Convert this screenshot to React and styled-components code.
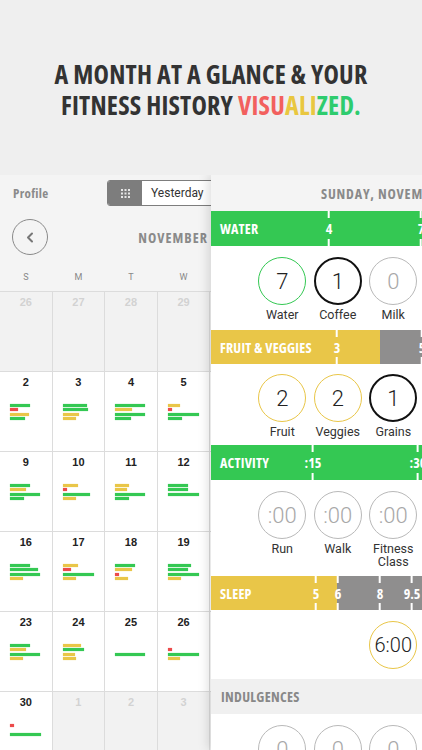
import React from 'react';
import styled, { createGlobalStyle } from 'styled-components';

const COND = `"Open Sans", "DejaVu Sans Condensed", "Roboto", sans-serif`;
const SANS = `"Roboto", "Liberation Sans", sans-serif`;
const HELV = `"Liberation Sans", "Roboto", sans-serif`;

const GREEN = '#34c853';
const YELLOW = '#e9c648';
const RED = '#ec4b4b';
const GRAY = '#8f8e8e';
const COLORS = { g: GREEN, y: YELLOW, r: RED };

const Global = createGlobalStyle`
  html, body { margin: 0; padding: 0; background: #fff; }
  body { width: 422px; height: 750px; overflow: hidden; }
  * { box-sizing: border-box; }
`;

const Page = styled.div`
  width: 422px;
  height: 750px;
  display: flex;
  flex-direction: column;
  overflow: hidden;
`;

const Hero = styled.header`
  height: 175px;
  flex: none;
  background: #efefef;
  display: flex;
  flex-direction: column;
  align-items: center;
  justify-content: center;
  padding-top: 5px;
  font-family: ${COND};
  font-stretch: 75%;
  font-weight: 700;
  font-size: 26px;
  letter-spacing: 0.2px;
  line-height: 31px;
  color: #333;
  text-align: center;
`;

const Accent = styled.span`
  color: ${(p) => p.$c};
`;

const Stage = styled.div`
  position: relative;
  flex: 1;
  overflow: hidden;
  background: #f4f4f4;
`;

const Calendar = styled.section`
  width: 368px;
`;

const Toolbar = styled.div`
  height: 36px;
  display: flex;
  align-items: center;
  padding-left: 13px;
`;

const ProfileLink = styled.span`
  width: 94px;
  font-family: ${COND};
  font-stretch: 75%;
  font-weight: 700;
  font-size: 13px;
  letter-spacing: 0.3px;
  color: #8a8a8a;
`;

const Segmented = styled.div`
  display: flex;
  height: 26px;
  border: 1px solid #7d7d7d;
  border-radius: 3px;
  overflow: hidden;
  background: #fff;
`;

const SegIcon = styled.div`
  width: 34px;
  background: #7d7d7d;
  display: grid;
  place-items: center;
`;

const SegLabel = styled.div`
  display: flex;
  align-items: center;
  padding: 0 9px;
  font-family: ${SANS};
  font-size: 12px;
  color: #333;
  border-right: 1px solid #7d7d7d;
  &:last-child { border-right: none; }
`;

const MonthRow = styled.div`
  height: 52px;
  display: grid;
  grid-template-columns: 1fr auto 1fr;
  align-items: center;
  padding-left: 12px;
`;

const BackButton = styled.button`
  width: 36px;
  height: 36px;
  border-radius: 50%;
  border: 1.5px solid #8a8a8a;
  background: transparent;
  padding: 0;
  display: grid;
  place-items: center;
`;

const MonthTitle = styled.div`
  font-family: ${COND};
  font-stretch: 75%;
  font-weight: 700;
  font-size: 14px;
  letter-spacing: 1px;
  color: #8a8a8a;
`;

const Weekdays = styled.div`
  height: 28px;
  display: grid;
  grid-template-columns: repeat(7, 51.6px);
  column-gap: 1px;
  align-items: center;
  font-family: ${SANS};
  font-size: 9px;
  color: #888;
  text-align: center;
`;

const Grid = styled.div`
  display: grid;
  grid-template-columns: repeat(7, 51.6px);
  grid-auto-rows: 79px;
  gap: 1px;
  background: #dcdcdc;
  border-top: 1px solid #dcdcdc;
`;

const Cell = styled.div`
  background: ${(p) => (p.$out ? '#f2f2f2' : '#fff')};
  padding-top: 4px;
`;

const DayNum = styled.div`
  text-align: center;
  font-family: ${HELV};
  font-weight: 700;
  font-size: 11px;
  line-height: 13px;
  color: ${(p) => (p.$out ? '#d2d2d2' : '#222')};
`;

const Bars = styled.div`
  margin-top: 15px;
  padding-left: 10px;
  display: flex;
  flex-direction: column;
  gap: 1.3px;
`;

const Bar = styled.div`
  height: 3px;
  width: ${(p) => p.$w}px;
  background: ${(p) => p.$c || 'transparent'};
  box-shadow: ${(p) => (p.$c ? `0 0 1px ${p.$c}` : 'none')};
`;

const Detail = styled.aside`
  position: absolute;
  top: 0;
  left: 211px;
  width: 211px;
  bottom: 0;
  background: #fff;
  box-shadow: -3px 0 10px rgba(0, 0, 0, 0.13);
  overflow: hidden;
`;

const DetailHeader = styled.div`
  height: 36px;
  background: #f4f4f4;
  display: flex;
  align-items: center;
  padding-left: 12px;
  white-space: nowrap;
`;

const DateTitle = styled.div`
  margin-left: 98px;
  font-family: ${COND};
  font-stretch: 75%;
  font-weight: 700;
  font-size: 14px;
  letter-spacing: 0.8px;
  color: #8a8a8a;
`;

const ScaleBar = styled.div`
  position: relative;
  height: ${(p) => p.$h}px;
  display: flex;
  align-items: center;
  background: ${(p) => p.$bg};
  overflow: hidden;
`;

const Fill = styled.div`
  position: absolute;
  top: 0;
  bottom: 0;
  left: 0;
  background: ${(p) => p.$c};
`;

const BarLabel = styled.span`
  position: relative;
  padding-left: 9px;
  font-family: ${COND};
  font-stretch: 75%;
  font-weight: 700;
  font-size: 14px;
  letter-spacing: 0.2px;
  color: #fff;
`;

const Tick = styled.div`
  position: absolute;
  top: 0;
  bottom: 0;
  transform: translateX(-50%);
  display: flex;
  flex-direction: column;
  align-items: center;
  justify-content: space-between;
  font-family: ${COND};
  font-stretch: 75%;
  font-weight: 700;
  font-size: 14px;
  color: #fff;
  line-height: 15px;
`;

const TickLine = styled.span`
  width: 2px;
  height: 7px;
  background: #fff;
`;

const CircleRow = styled.div`
  height: ${(p) => p.$h}px;
  padding-top: ${(p) => p.$pt}px;
  padding-right: 1px;
  display: flex;
  justify-content: flex-end;
  align-items: flex-start;
`;

const Item = styled.div`
  width: 55.5px;
  display: flex;
  flex-direction: column;
  align-items: center;
`;

const TONES = {
  green: { b: `1.6px solid ${GREEN}`, c: '#222' },
  black: { b: '2px solid #111', c: '#222' },
  gray: { b: '1px solid #b9b9b9', c: '#a8a8a8' },
  yellow: { b: `1.6px solid ${YELLOW}`, c: '#222' },
};

const Circle = styled.div`
  width: 48px;
  height: 48px;
  border-radius: 50%;
  border: ${(p) => TONES[p.$tone].b};
  display: grid;
  place-items: center;
  font-family: ${SANS};
  font-weight: 300;
  font-size: ${(p) => p.$fs || 22}px;
  color: ${(p) => TONES[p.$tone].c};
`;

const ItemLabel = styled.div`
  margin-top: 3px;
  font-family: ${SANS};
  font-size: 12.5px;
  line-height: 13px;
  color: #333;
  text-align: center;
`;

const SectionHeader = styled.div`
  height: 35px;
  background: #f0f0f0;
  display: flex;
  align-items: center;
  padding-left: 10px;
  font-family: ${COND};
  font-stretch: 75%;
  font-weight: 700;
  font-size: 14px;
  letter-spacing: 0.3px;
  color: #888;
`;

const B = (s) => (s ? { c: COLORS[s[0]], w: Number(s.slice(1)) } : null);
const d = (n, bars = [], out = false) => ({ n, out, bars: bars.map(B) });

const WEEKS = [
  [d(26, [], true), d(27, [], true), d(28, [], true), d(29, [], true), d(30, [], true), d(31, [], true), d(1, ['g20', 'y14', 'g28'])],
  [d(2, ['g20', 'r8', 'y19', 'g15']), d(3, ['g24', 'g25', 'y16', 'y13']), d(4, ['g30', 'y17', 'g30', 'g16']), d(5, ['y12', 'r4', 'g31', 'g14']), d(6, ['g22', 'y15', 'g30']), d(7, ['y14', 'g24', 'g30', 'y12']), d(8, ['g20', 'g28'])],
  [d(9, ['g20', 'y16', 'g30', 'g14']), d(10, ['y15', 'r4', 'g27', 'y13']), d(11, ['y14', 'y12', 'g30', 'g14']), d(12, ['g20', 'g20', 'g31']), d(13, ['g20', 'y16', 'g30']), d(14, ['y15', 'g22', 'g30', 'y13']), d(15, ['g26', 'y12'])],
  [d(16, ['g20', 'g28', 'g30', 'y13']), d(17, ['y15', 'r8', 'g31', 'y13']), d(18, ['g20', 'y17', 'r4', 'y13']), d(19, ['g23', 'g20', 'g31', 'y13']), d(20, ['g20', 'y14', 'g30']), d(21, ['y16', 'r4', 'g28', 'y12']), d(22, ['g20', 'g30'])],
  [d(23, ['g20', 'y16', 'g30', 'y13']), d(24, ['y18', 'g21', 'y12', 'y13']), d(25, ['', '', 'g30']), d(26, ['', 'r4', 'g31', 'y12']), d(27, ['g20', 'y14']), d(28, ['y14', 'g26']), d(29, ['g22'])],
  [d(30, ['r4', '', 'g31']), d(1, [], true), d(2, [], true), d(3, [], true), d(4, [], true), d(5, [], true), d(6, [], true)],
];

const GridIcon = () => (
  <svg width="9" height="9" viewBox="0 0 9 9">
    {[0, 3.5, 7].map((y) =>
      [0, 3.5, 7].map((x) => <rect key={`${x}-${y}`} x={x} y={y} width="2" height="2" fill="#e6e6e6" />)
    )}
  </svg>
);

const Chevron = () => (
  <svg width="8" height="11" viewBox="0 0 8 11">
    <polyline points="6,1.5 2,5.5 6,9.5" fill="none" stroke="#777" strokeWidth="2" strokeLinecap="round" strokeLinejoin="round" />
  </svg>
);

const CloseIcon = () => (
  <svg width="13" height="13" viewBox="0 0 13 13">
    <path d="M1.5 1.5 L11.5 11.5 M11.5 1.5 L1.5 11.5" stroke="#8a8a8a" strokeWidth="2.6" strokeLinecap="round" />
  </svg>
);

function Scale({ label, h, bg, fill, ticks }) {
  return (
    <ScaleBar $h={h} $bg={bg}>
      {fill && <Fill $c={fill.c} style={{ width: fill.w }} />}
      <BarLabel>{label}</BarLabel>
      {ticks.map((t) => (
        <Tick key={t.t} style={{ left: t.x }}>
          <TickLine />
          <span>{t.t}</span>
          <TickLine />
        </Tick>
      ))}
    </ScaleBar>
  );
}

function Circles({ h, pt, items }) {
  return (
    <CircleRow $h={h} $pt={pt}>
      {items.map((it, i) => (
        <Item key={i}>
          <Circle $tone={it.tone} $fs={it.fs}>{it.v}</Circle>
          {it.label && <ItemLabel>{it.label}</ItemLabel>}
        </Item>
      ))}
    </CircleRow>
  );
}

export default function App() {
  return (
    <Page>
      <Global />
      <Hero>
        <div>A MONTH AT A GLANCE &amp; YOUR</div>
        <div>
          FITNESS HISTORY <Accent $c="#f2605e">VISU</Accent>
          <Accent $c="#e9c740">ALI</Accent>
          <Accent $c="#2ecc6e">ZED.</Accent>
        </div>
      </Hero>
      <Stage>
        <Calendar>
          <Toolbar>
            <ProfileLink>Profile</ProfileLink>
            <Segmented>
              <SegIcon><GridIcon /></SegIcon>
              <SegLabel>Yesterday</SegLabel>
              <SegLabel>Today</SegLabel>
            </Segmented>
          </Toolbar>
          <MonthRow>
            <BackButton aria-label="Previous month"><Chevron /></BackButton>
            <MonthTitle>NOVEMBER 2014</MonthTitle>
            <span />
          </MonthRow>
          <Weekdays>
            {['S', 'M', 'T', 'W', 'T', 'F', 'S'].map((w, i) => <span key={i}>{w}</span>)}
          </Weekdays>
          <Grid>
            {WEEKS.flat().map((c, i) => (
              <Cell key={i} $out={c.out}>
                <DayNum $out={c.out}>{c.n}</DayNum>
                {c.bars.length > 0 && (
                  <Bars>
                    {c.bars.map((b, j) => <Bar key={j} $c={b && b.c} $w={b ? b.w : 1} />)}
                  </Bars>
                )}
              </Cell>
            ))}
          </Grid>
        </Calendar>

        <Detail>
          <DetailHeader>
            <CloseIcon />
            <DateTitle>SUNDAY, NOVEMBER 2</DateTitle>
          </DetailHeader>
          <Scale label="WATER" h={35} bg={GREEN} ticks={[{ x: 118, t: '4' }, { x: 210, t: '7' }]} />
          <Circles
            h={84}
            pt={11}
            items={[
              { v: '7', tone: 'green', label: 'Water' },
              { v: '1', tone: 'black', label: 'Coffee' },
              { v: '0', tone: 'gray', label: 'Milk' },
            ]}
          />
          <Scale label="FRUIT & VEGGIES" h={34} bg={GRAY} fill={{ c: YELLOW, w: 169 }} ticks={[{ x: 126, t: '3' }, { x: 211, t: '5' }]} />
          <Circles
            h={81}
            pt={10}
            items={[
              { v: '2', tone: 'yellow', label: 'Fruit' },
              { v: '2', tone: 'yellow', label: 'Veggies' },
              { v: '1', tone: 'black', label: 'Grains' },
            ]}
          />
          <Scale label="ACTIVITY" h={35} bg={GREEN} ticks={[{ x: 102, t: ':15' }, { x: 207, t: ':30' }]} />
          <Circles
            h={96}
            pt={11}
            items={[
              { v: ':00', tone: 'gray', label: 'Run' },
              { v: ':00', tone: 'gray', label: 'Walk' },
              { v: ':00', tone: 'gray', label: <>Fitness<br />Class</> },
            ]}
          />
          <Scale
            label="SLEEP"
            h={34}
            bg={GRAY}
            fill={{ c: YELLOW, w: 126 }}
            ticks={[{ x: 105, t: '5' }, { x: 127, t: '6' }, { x: 169, t: '8' }, { x: 201, t: '9.5' }]}
          />
          <Circles h={69} pt={11} items={[{ v: '6:00', tone: 'yellow', fs: 20 }]} />
          <SectionHeader>INDULGENCES</SectionHeader>
          <Circles
            h={60}
            pt={11}
            items={[
              { v: '0', tone: 'gray' },
              { v: '0', tone: 'gray' },
              { v: '0', tone: 'gray' },
            ]}
          />
        </Detail>
      </Stage>
    </Page>
  );
}
